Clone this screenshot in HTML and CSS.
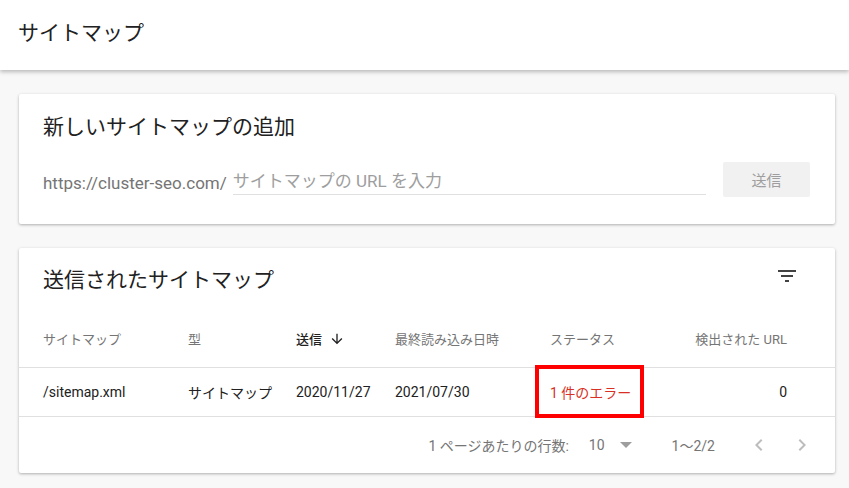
FILE: index.html
```html
<!DOCTYPE html>
<html>
<head>
  <title>サイトマップ</title>
  <link rel="stylesheet" href="styles.css">
</head>
<body>
  <div class="topbar">
    <h1>サイトマップ</h1>
  </div>

  <div class="page">
    <div class="card add-card">
      <h2>新しいサイトマップの追加</h2>
      <div class="add-row">
        <span class="prefix">https://cluster-seo.com/</span>
        <input class="url-input" type="text" placeholder="サイトマップの URL を入力">
        <button class="submit" disabled>送信</button>
      </div>
    </div>

    <div class="card list-card">
      <div class="list-head">
        <h2>送信されたサイトマップ</h2>
        <span class="icon-btn">
          <svg width="24" height="24" viewBox="0 0 24 24"><path d="M10 18h4v-2h-4v2zM3 6v2h18V6H3zm3 7h12v-2H6v2z" fill="#424242"/></svg>
        </span>
      </div>

      <div class="row head-row">
        <div>サイトマップ</div>
        <div>型</div>
        <div class="sorted">送信
          <svg width="16" height="16" viewBox="0 0 24 24"><path d="M20 12l-1.41-1.41L13 16.17V4h-2v12.17l-5.58-5.59L4 12l8 8 8-8z" fill="#212121"/></svg>
        </div>
        <div>最終読み込み日時</div>
        <div>ステータス</div>
        <div class="num">検出された URL</div>
      </div>

      <div class="row data-row">
        <div>/sitemap.xml</div>
        <div>サイトマップ</div>
        <div>2020/11/27</div>
        <div>2021/07/30</div>
        <div class="status">1 件のエラー<span class="mark"></span></div>
        <div class="num">0</div>
      </div>

      <div class="pager">
        <span class="label">1 ページあたりの行数:</span>
        <span class="per-page">10</span>
        <span class="caret"></span>
        <span class="range">1〜2/2</span>
        <span class="nav">
          <svg width="24" height="24" viewBox="0 0 24 24"><path d="M15.41 7.41L14 6l-6 6 6 6 1.41-1.41L10.83 12z" fill="#bdbdbd"/></svg>
          <svg width="24" height="24" viewBox="0 0 24 24"><path d="M10 6L8.59 7.41 13.17 12l-4.58 4.59L10 18l6-6z" fill="#bdbdbd"/></svg>
        </span>
      </div>
    </div>
  </div>
</body>
</html>
```

FILE: styles.css
```css
body {
  margin: 0;
  background-color: #f8f8f8;
  font-family: Roboto, "Noto Sans CJK JP", sans-serif;
  color: #212121;
}

.topbar {
  height: 70px;
  background-color: #fff;
  box-shadow: 0 2px 4px rgba(0, 0, 0, 0.25);
  display: flex;
  align-items: center;
  padding-left: 18px;
}

.topbar h1 {
  margin: 0 0 8px 0;
  font-size: 21px;
  font-weight: normal;
  color: #212121;
}

.page {
  padding: 24px 14px 0 19px;
}

.card {
  background-color: #fff;
  border-radius: 2px;
  box-shadow: 0 1px 3px rgba(0, 0, 0, 0.3);
  margin-bottom: 24px;
}

.card h2 {
  margin: 0;
  font-size: 21px;
  font-weight: normal;
  color: #212121;
}

.add-card {
  padding: 16px 25px 27px 24px;
}

.add-row {
  display: flex;
  align-items: flex-end;
  margin-top: 22px;
}

.prefix {
  font-size: 17px;
  color: #757575;
  padding-bottom: 4px;
  margin-right: 6px;
}

.url-input {
  flex: 1;
  border: none;
  border-bottom: 1px solid #e0e0e0;
  font-family: Roboto, "Noto Sans CJK JP", sans-serif;
  font-size: 17px;
  padding: 0 0 1px 0;
  height: 24px;
  margin-bottom: 2px;
  outline: none;
}

.url-input::placeholder {
  color: #9e9e9e;
}

.submit {
  width: 87px;
  height: 35px;
  margin-left: 17px;
  border: none;
  border-radius: 2px;
  background-color: #f1f1f1;
  color: #9e9e9e;
  font-family: Roboto, "Noto Sans CJK JP", sans-serif;
  font-size: 15px;
}

.list-head {
  height: 60px;
  display: flex;
  align-items: center;
  justify-content: space-between;
  padding: 0 24px;
}

.icon-btn {
  width: 48px;
  height: 48px;
  display: flex;
  align-items: center;
  justify-content: center;
  margin-bottom: 4px;
}

.row {
  display: grid;
  grid-template-columns: 145px 108px 99px 155px 1fr 120px;
  padding: 0 48px 0 24px;
  align-items: center;
  border-bottom: 1px solid #e0e0e0;
  font-size: 13px;
}

.head-row {
  height: 60px;
  color: #757575;
  padding-top: 2px;
  box-sizing: border-box;
}

.head-row .sorted {
  color: #212121;
  font-weight: 500;
  display: flex;
  align-items: center;
  gap: 7px;
}

.data-row {
  height: 48px;
  font-size: 14px;
}

.num {
  text-align: right;
}

.status {
  position: relative;
  color: #d93025;
}

.status .mark {
  position: absolute;
  left: -15px;
  top: -17px;
  width: 101px;
  height: 45px;
  border: 4px solid #ff0000;
}

.pager {
  height: 56px;
  display: flex;
  align-items: center;
  justify-content: flex-end;
  padding-right: 21px;
  font-size: 14px;
  color: #757575;
}

.per-page {
  margin-left: 20px;
}

.caret {
  margin-left: 15px;
  width: 0;
  height: 0;
  border-left: 6px solid transparent;
  border-right: 6px solid transparent;
  border-top: 6px solid #9e9e9e;
}

.range {
  margin-left: 40px;
}

.nav {
  display: flex;
  gap: 19px;
  margin-left: 32px;
}
```
